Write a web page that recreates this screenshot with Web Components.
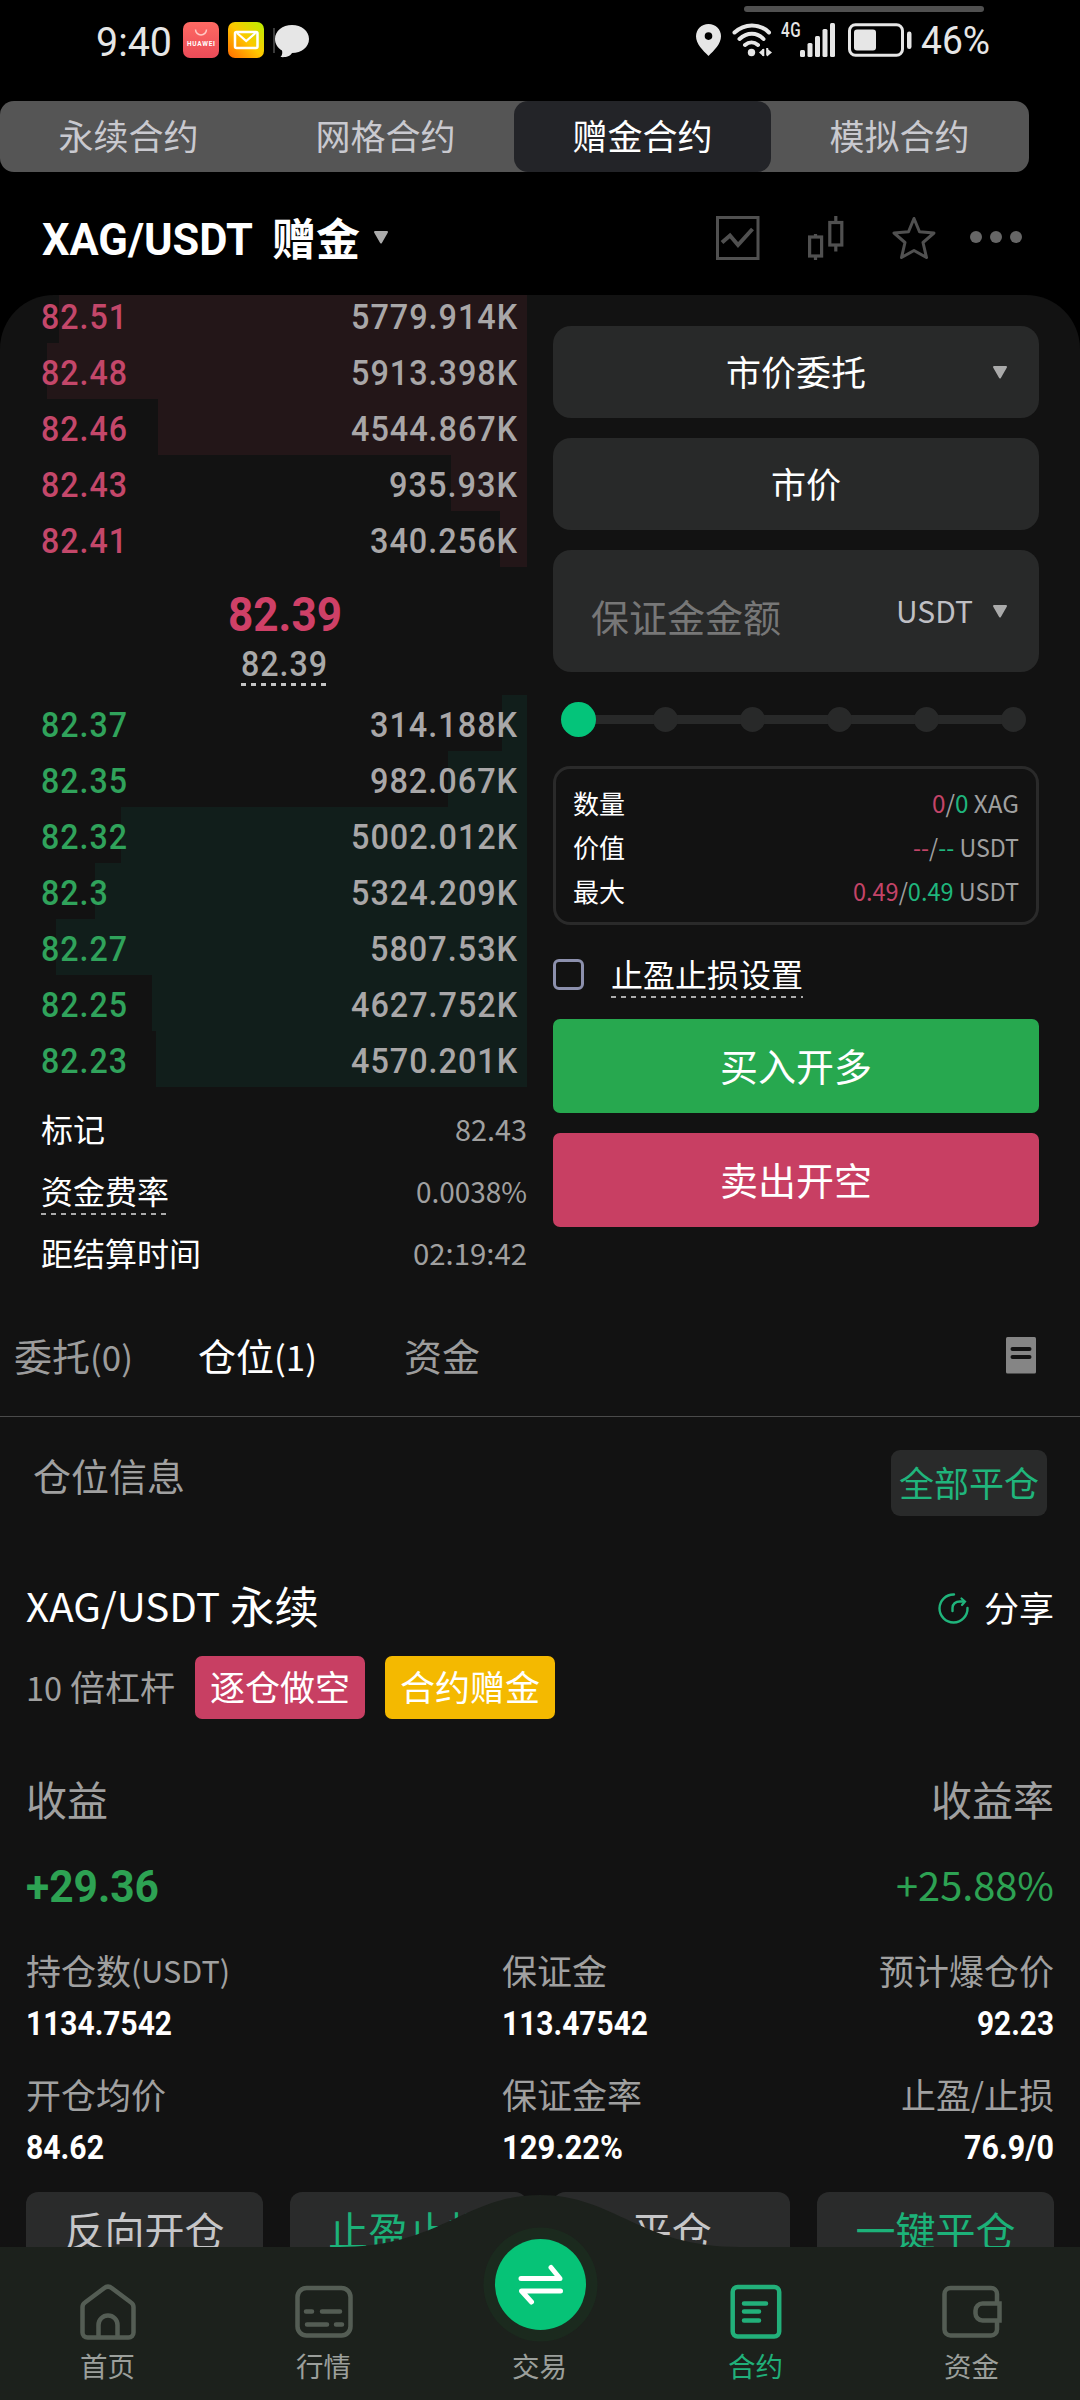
<!DOCTYPE html>
<html lang="zh-CN">
<head>
<meta charset="utf-8">
<title>XAG/USDT 赠金合约</title>
<style>
html,body{margin:0;padding:0;background:#000}
body{width:1080px;height:2400px;overflow:hidden;color:#fff;font-family:"Noto Sans CJK SC","Noto Sans",sans-serif}
</style>
</head>
<body>
<contract-page></contract-page>
<script>
const define = (name, css, html, after) => customElements.define(name, class extends HTMLElement {
  connectedCallback() {
    if (this.shadowRoot) return;
    const root = this.attachShadow({ mode: "open" });
    root.innerHTML = `<style>*{box-sizing:border-box}:host{display:block;box-sizing:border-box}svg{display:block;flex:none}${css}</style>` +
      (typeof html === "function" ? html(this) : html);
    if (after) after(this, root);
  }
});

/* Single line of text, vertically centred on its glyphs and fitted to an optional width.
   s = font size, w = width, f = face (d: bold numerals, r: medium numerals) */
define("t-x", `
:host{display:inline-flex;align-items:center;flex:none;white-space:nowrap;line-height:1}
span{display:inline-block;flex:none;transform-origin:0 50%}
`, `<span><slot></slot></span>`, (el, root) => {
  const span = root.querySelector("span"), f = el.getAttribute("f");
  const s = +el.getAttribute("s"), w = +el.getAttribute("w");
  el.style.fontSize = s + "px";
  if (f) {
    span.style.fontFamily = 'Roboto,"Noto Sans CJK SC",sans-serif';
    span.style.fontWeight = f === "d" ? 700 : f === "r" ? 500 : 400;
  }
  if (f === "r") span.style.letterSpacing = ".03em";
  const dy = f ? 0.014 : -0.065;
  let sx = 1;
  if (w) { sx = w / span.getBoundingClientRect().width; el.style.width = w + "px"; }
  span.style.transform = `translateY(${dy * s}px) scaleX(${sx})`;
});

define("down-caret", `:host{flex:none}`, `<svg width="16" height="13" viewBox="0 0 16 13"><path d="M2 1H14L8 11.500Z" fill="#aaa" stroke="#aaa" stroke-width="2" stroke-linejoin="round"/></svg>`);

define("dash-line", `:host{height:var(--h,2px);background:repeating-linear-gradient(90deg,var(--c,#aaa) 0 5px,transparent 5px 10px)}`, ``);

define("status-bar", `
:host{height:101px;color:#e6e6e6;position:relative}
.row{display:flex;align-items:center;height:79px;padding:0 90px 0 96px}
.sp{flex:1}
.grip{position:absolute;left:744px;top:6px;width:240px;height:6px;border-radius:3px;background:#505050}
`, `
<div class="grip"></div>
<div class="row">
 <t-x s="41" w="76" f="n" style="margin-top:3px">9:40</t-x>
 <svg style="margin-left:11px" width="36" height="36" viewBox="0 0 36 36"><defs><linearGradient id="a" x1="0" y1="0" x2="0" y2="1"><stop offset="0" stop-color="#ff6a63"/><stop offset="1" stop-color="#ea4b58"/></linearGradient></defs><rect width="36" height="36" rx="7" fill="url(#a)"/><path d="M12.500 7.500a5.500 5.500 0 0 0 11 0" fill="none" stroke="#ffc9c4" stroke-width="1.500"/><text x="4" y="23.800" font-family="Roboto" font-weight="700" font-size="6.500" textLength="28" fill="#fff">HUAWEI</text></svg>
 <svg style="margin-left:9px" width="36" height="36" viewBox="0 0 36 36"><defs><linearGradient id="b" x1="0" y1="1" x2="1" y2="0"><stop offset="0" stop-color="#ff6a00"/><stop offset=".5" stop-color="#ffc800"/><stop offset="1" stop-color="#b8f000"/></linearGradient></defs><rect width="36" height="36" rx="7" fill="url(#b)"/><rect x="7" y="10" width="22.500" height="16" rx="1.500" fill="none" stroke="#fff" stroke-width="2.500"/><path d="M9 11l9.200 8L27.500 11" fill="none" stroke="#fff" stroke-width="2.300"/></svg>
 <svg style="margin-left:9px" width="37" height="36" viewBox="0 0 37 36"><path d="M1 6v25" stroke="#777" stroke-width="1"/><path d="M19 3C28.500 3 36 9 36 17s-7.500 14-17 14c-2 4-8 4.500-11.500 4C9.500 33 9.500 30.500 9 28.500 4.500 26 2 21.800 2 17 2 9 9.500 3 19 3Z" fill="#e6e6e6"/></svg>
 <div class="sp"></div>
 <svg width="25" height="32" viewBox="0 0 25 32"><path fill-rule="evenodd" d="M12.500 0C19.500 0 25 5.300 25 12.300 25 20 18 26.500 12.500 32 7 26.500 0 20 0 12.300 0 5.300 5.500 0 12.500 0Zm0 8.300a3.800 3.800 0 1 0 0 7.600 3.800 3.800 0 0 0 0-7.600Z" fill="#e6e6e6"/></svg>
 <svg style="margin-left:11px" width="42" height="34" viewBox="0 0 42 34" fill="none" stroke="#e6e6e6" stroke-width="4" stroke-linecap="round"><path d="M2.500 9.500C12.500 0 27.500 0 37 9.500M7.500 16C15 9 25 9 31.500 16M13 22C17 18.500 22 18.500 26 22"/><circle cx="19.500" cy="29.500" r="3.700" fill="#e6e6e6" stroke="none"/><path d="M31.500 25.500v8l-4.500-4ZM35 33.500v-8l5 4Z" fill="#e6e6e6" stroke="none"/><path d="M31.300 26v7M35.200 25v7.500" stroke-width="2" stroke-linecap="butt"/></svg>
 <t-x s="21" w="20" f="r" style="margin:-19px 0 0 7px">4G</t-x>
 <svg style="margin-left:-1px" width="36" height="34" viewBox="0 0 36 34" fill="#e6e6e6"><rect x="0" y="27" width="5" height="7" rx="1.500"/><rect x="7.500" y="20" width="5" height="14" rx="1.500"/><rect x="15" y="13" width="5" height="21" rx="1.500"/><rect x="22.500" y="6" width="5" height="28" rx="1.500"/><rect x="30" y="0" width="5" height="34" rx="1.500"/></svg>
 <svg style="margin-left:12px" width="64" height="34" viewBox="0 0 64 34"><rect x="1.500" y="1.700" width="53" height="30.500" rx="6" fill="none" stroke="#e6e6e6" stroke-width="3"/><rect x="6" y="6.500" width="22" height="21" rx="3" fill="#e6e6e6"/><rect x="59" y="8.500" width="4.500" height="17.500" rx="2.200" fill="#e6e6e6"/></svg>
 <t-x s="39" w="69" f="n" style="margin:2px 0 0 9px">46%</t-x>
</div>`);

define("mode-tabs", `
:host{display:flex;width:1029px;height:71px;background:#555;border-radius:14px;overflow:hidden;color:#c9c9cf}
div{width:257px;display:flex;align-items:center;justify-content:center}
.on{background:#232428;color:#fff;border-radius:14px}
`, ["永续合约","网格合约","赠金合约","模拟合约"].map((t,i)=>`<div class="${i===2?"on":""}"><t-x s="35">${t}</t-x></div>`).join(""));

define("pair-header", `
:host{display:flex;align-items:center;height:123px;padding:8px 57px 0 42px}
.sp{flex:1}
`, `
<t-x s="44.500" w="211" f="d" style="margin-top:3px">XAG/USDT</t-x>
<t-x s="44" style="margin:4px 0 0 19px;font-weight:700">赠金</t-x>
<down-caret style="margin-left:13px"></down-caret>
<div class="sp"></div>
<svg width="44" height="44" viewBox="0 0 44 44" fill="none" stroke="#505050" stroke-width="3"><rect x="1.500" y="1.500" width="40.500" height="41"/><path d="M6 26.500l8-7 8 9.500 14.500-16" stroke-width="4"/></svg>
<svg style="margin-left:48px" width="36" height="44" viewBox="0 0 36 44" fill="none" stroke="#505050" stroke-width="3.200"><rect x="1.600" y="21" width="12" height="19"/><path d="M7.500 18v3M7.500 40v4"/><rect x="21.800" y="6.500" width="12" height="22.500"/><path d="M27.800 0v6.500M27.800 29v6.500"/></svg>
<svg style="margin-left:48px" width="44" height="44" viewBox="0 0 44 44" fill="none" stroke="#505050" stroke-width="3" stroke-linejoin="round"><path d="M22 2.500L27.500 15.800 42 17 31 26.500 34.500 41.500 22 34.500 9.500 41.500 13 26.500 2 17 16.500 15.800Z"/></svg>
<svg style="margin-left:33px" width="54" height="14" viewBox="0 0 54 14" fill="#666"><circle cx="7" cy="6" r="6"/><circle cx="27" cy="6" r="6"/><circle cx="47" cy="6" r="6"/></svg>`);

define("book-row", `
:host{display:flex;justify-content:space-between;align-items:center;height:56px;padding:5px 10px 0 41px;background:linear-gradient(var(--bar),var(--bar)) no-repeat right/var(--w) 100%}
`, el => {
  const p = el.getAttribute("p"), q = el.getAttribute("q");
  el.style.setProperty("--w", 527 - +el.getAttribute("x") + "px");
  const wd = t => [...t].reduce((a,c)=>a+(c==="."?9.5:c==="K"?21:19.1),0);
  return `<t-x s="35" w="${wd(p)+1}" f="r" style="color:var(--price)">${p}</t-x><t-x s="35" w="${wd(q)+3}" f="r" style="color:#a9a7a8;margin-right:-1px">${q}</t-x>`;
});

define("order-book", `
:host{width:527px;flex:none;margin-top:-8px}
.ask{--bar:#231618;--price:#c4476a}
.bid{--bar:#111e1b;--price:#30a35b}
.mid{height:128px;margin-left:42px;padding-top:24px;display:flex;flex-direction:column;align-items:center}
.info{padding:12px 0 0 41px}
.info>div{display:flex;justify-content:space-between;align-items:center;height:62px;color:#a0a0a0}
.info b{font-weight:400;color:#fff;display:flex;flex-direction:column;justify-content:center;height:62px}
.info dash-line{margin:5px 0 -7px}
`, () => {
  const rows = a => a.map(r=>`<book-row p="${r[0]}" q="${r[1]}" x="${r[2]}"></book-row>`).join("");
  return `<div class="ask">${rows([["82.51","5779.914K",59],["82.48","5913.398K",47],["82.46","4544.867K",158],["82.43","935.93K",451],["82.41","340.256K",500]])}</div>
<div class="mid"><t-x s="48" w="114" f="d" style="height:46px;color:#cf4067">82.39</t-x><t-x s="35" w="87" f="r" style="height:33px;margin:11px 0 0 -1px;color:#a9a9a9">82.39</t-x><dash-line style="--h:3px;--c:#c4c4c4;width:86px;margin:2px 2px 0 0"></dash-line></div>
<div class="bid">${rows([["82.37","314.188K",502],["82.35","982.067K",448],["82.32","5002.012K",121],["82.3","5324.209K",95],["82.27","5807.53K",56],["82.25","4627.752K",152],["82.23","4570.201K",156]])}</div>
<div class="info">
<div><b><t-x s="32">标记</t-x></b><t-x s="29" w="72">82.43</t-x></div>
<div><b><t-x s="32">资金费率</t-x><dash-line style="width:126px"></dash-line></b><t-x s="29" w="111">0.0038%</t-x></div>
<div><b><t-x s="32">距结算时间</t-x></b><t-x s="29" w="114">02:19:42</t-x></div>
</div>`;
});

define("amount-slider", `
:host{display:flex;align-items:center;justify-content:space-between;height:36px;margin:29px 13px 0 8px;background:linear-gradient(#282929,#282929) no-repeat 20px 50%/430px 9px}
i{width:25px;height:25px;border-radius:50%;background:#282929}
.on{width:35px;height:35px;background:#04c47a;margin-right:-5px}
`, `<i class="on"></i><i></i><i></i><i></i><i></i><i></i>`);

define("order-form", `
:host{width:486px;margin:31px 0 0 26px;flex:none}
.box{height:92px;margin-bottom:20px;border-radius:18px;background:#282929;display:flex;align-items:center;justify-content:center}
.box.sel{justify-content:space-between;padding:0 31px 0 173px}
.box.amt{height:122px;margin:0;padding:0 31px 0 38px}
.sp{flex:1}
.sum{height:159px;margin-top:29px;border:3px solid #2a2a2a;border-radius:17px;padding:14px 17px 0 17px}
.sum div{display:flex;justify-content:space-between;align-items:center;height:44px;color:#a0a0a0}
.sum div>t-x:first-child{color:#fff}
.s{color:#c44468}.l{color:#1fb67d}
.chk{display:flex;align-items:center;height:94px;padding-top:5px}
.chk i{width:31px;height:31px;border:3px solid #8c90ad;border-radius:6px;margin-right:27px}
.chk t-x{margin-bottom:5px}
.chk div{display:flex;flex-direction:column}
.chk dash-line{margin-bottom:-7px}
.btn{height:94px;border-radius:7px;display:flex;align-items:center;justify-content:center}
.buy{background:#27a84f;margin-bottom:20px}.sell{background:#c83f63}
`, `
<div class="box sel"><t-x s="35">市价委托</t-x><down-caret></down-caret></div>
<div class="box" style="padding-left:20px"><t-x s="35">市价</t-x></div>
<div class="box amt"><t-x s="38" style="color:#777;margin-top:14px">保证金金额</t-x><div class="sp"></div><t-x s="30" w="77" style="color:#bfbfc4;margin-top:2px">USDT</t-x><down-caret style="margin-left:19px"></down-caret></div>
<amount-slider></amount-slider>
<div class="sum">
<div><t-x s="26">数量</t-x><t-x s="24" w="87"><span class="s">0</span>/<span class="l">0</span> XAG</t-x></div>
<div><t-x s="26">价值</t-x><t-x s="24" w="106"><span class="s">--</span>/<span class="l">--</span> USDT</t-x></div>
<div><t-x s="26">最大</t-x><t-x s="24" w="166"><span class="s">0.49</span>/<span class="l">0.49</span> USDT</t-x></div>
</div>
<div class="chk"><i></i><div><t-x s="32">止盈止损设置</t-x><dash-line></dash-line></div></div>
<div class="btn buy"><t-x s="38" style="margin-top:2px">买入开多</t-x></div>
<div class="btn sell"><t-x s="38" style="margin-top:2px">卖出开空</t-x></div>`);

define("position-tabs", `
:host{display:flex;align-items:center;height:132px;padding:13px 44px 0 14px;border-bottom:1px solid #4a4a4a;color:#9c9c9c}
.sp{flex:1}div{display:flex;align-items:center}.on{color:#fff}
`, `
<div><t-x s="38">委托</t-x><t-x s="34" w="43" style="margin-top:3px">(0)</t-x></div>
<div class="on" style="margin-left:65px"><t-x s="38" >仓位</t-x><t-x s="34" w="43" style="margin-top:3px">(1)</t-x></div>
<t-x s="38" style="margin-left:87px">资金</t-x>
<div class="sp"></div>
<svg style="margin-top:-4px" width="30" height="37" viewBox="0 0 30 37"><rect width="30" height="36.500" rx="1.500" fill="#858585"/><path d="M6.500 12h17M6.500 20h17" stroke="#121212" stroke-width="4" stroke-linecap="round"/></svg>`);

define("metric-cell", `
:host{flex:none;display:flex;flex-direction:column;color:#a0a0a0}
:host([end]){align-items:flex-end;margin-left:auto}
.l{display:flex;align-items:center;height:40px}
.v{display:flex;align-items:center;height:30px;margin-top:18px;margin-bottom:-1px;color:#fff}
`, el => `<div class="l"><slot></slot></div><div class="v"><t-x s="32.500" w="${el.getAttribute("w")}" f="d">${el.getAttribute("v")}</t-x></div>`);

define("position-card", `
:host{padding:33px 26px 0 26px;color:#a0a0a0}
.r{display:flex;justify-content:space-between;align-items:center}
.g{color:#2da253}.tag{height:63px;border-radius:7px;padding:0 15px;display:flex;align-items:center;color:#fff}
.all{width:156px;height:66px;border-radius:9px;background:#292a2a;color:#20b57c;display:flex;align-items:center;justify-content:center;margin-right:7px}
.m{display:flex}
.m metric-cell:first-child{width:476px}
.acts{display:flex;gap:26.700px;margin:30px 0 0 0}
.acts div{flex:1;height:84px;border-radius:12px;background:#2a2b2b;color:#c6c6c8;display:flex;justify-content:center;align-items:center;padding-bottom:4px}
.acts .k{color:#1cb279}
`, `
<div class="r" style="align-items:flex-start"><t-x s="38" style="margin:8px 0 0 7px">仓位信息</t-x><div class="all"><t-x s="35">全部平仓</t-x></div></div>
<div class="r" style="height:60px;margin-top:62px;color:#fff"><div style="display:flex;align-items:center"><t-x s="39" w="194" style="margin-top:1px">XAG/USDT</t-x><t-x s="44.500" style="margin-left:10px">永续</t-x></div>
<div style="display:flex;align-items:center"><svg width="31" height="31" viewBox="0 0 31 31" fill="none" stroke="#20b57c" stroke-width="2.400" stroke-linecap="round"><path d="M16 1.500A14 14 0 1 0 29.500 15"/><path d="M14.500 18v-3c0-4 3-6.500 7.500-6.500h3"/><path d="M23.500 5.500l3.500 3-3 3.500" stroke-width="2.200"/></svg><t-x s="35" style="margin-left:15px">分享</t-x></div></div>
<div class="r" style="justify-content:flex-start;height:63px;margin-top:18px"><t-x s="32" w="36" style="margin-top:2px">10</t-x><t-x s="35" style="margin-left:8px;width:105px">倍杠杆</t-x><div class="tag" style="background:#c83f63;margin-left:20px"><t-x s="35">逐仓做空</t-x></div><div class="tag" style="background:#f4b900;margin-left:20px"><t-x s="35">合约赠金</t-x></div></div>
<div class="r" style="height:50px;margin-top:57px"><t-x s="41">收益</t-x><t-x s="41">收益率</t-x></div>
<div class="r g" style="height:40px;margin-top:40px"><t-x s="45" w="133" f="d" style="margin-top:-2px">+29.36</t-x><t-x s="39" w="158" style="margin-top:2px">+25.88%</t-x></div>
<div class="m" style="margin-top:45px"><metric-cell v="1134.7542" w="146"><t-x s="35">持仓数</t-x><t-x s="30.500" w="99" style="margin-top:2px">(USDT)</t-x></metric-cell><metric-cell v="113.47542" w="146"><t-x s="35">保证金</t-x></metric-cell><metric-cell end v="92.23" w="77"><t-x s="35">预计爆仓价</t-x></metric-cell></div>
<div class="m" style="margin-top:37px"><metric-cell v="84.62" w="78"><t-x s="35">开仓均价</t-x></metric-cell><metric-cell v="129.22%" w="121"><t-x s="35">保证金率</t-x></metric-cell><metric-cell end v="76.9/0" w="90"><t-x s="35">止盈</t-x><t-x s="33" w="13">/</t-x><t-x s="35">止损</t-x></metric-cell></div>
<div class="acts"><div><t-x s="40">反向开仓</t-x></div><div class="k"><t-x s="40">止盈止损</t-x></div><div><t-x s="40">平仓</t-x></div><div class="k"><t-x s="40">一键平仓</t-x></div></div>`);

define("bottom-nav", `
:host{position:absolute;left:0;bottom:0;width:1080px;height:206px}
.bg{position:absolute;left:0;top:0}
.row{position:relative;display:flex;height:206px}
.row div{width:216px;display:flex;flex-direction:column;align-items:center;justify-content:flex-end;padding:0 1px 19px 0;color:#9b9f9b}
svg.i{fill:none;stroke:#545d54;stroke-width:4.500;margin-bottom:14px}
.row .on{color:#20b07a}.on svg.i{stroke:#22b07a}
`, `
<svg class="bg" width="1080" height="206" viewBox="0 0 1080 206"><path d="M0 53H340C440 53 466 1 540 1S640 53 740 53H1080V206H0Z" fill="#1c211c"/><circle cx="540.500" cy="90.500" r="57" fill="#1b2a1e"/><circle cx="540.500" cy="90.500" r="45.500" fill="#06c377"/><path d="M521 84.500H560L551 73.500M560.500 97H521.500L531.500 108" fill="none" stroke="#fff" stroke-width="5" stroke-linecap="round" stroke-linejoin="round"/></svg>
<div class="row">
<div><svg class="i" width="56" height="56" viewBox="0 0 56 56"><path d="M2.500 23C2.500 21 3.500 19.500 5 18.500L24 4.200c2.500-1.900 5.500-1.900 8 0L51 18.500c1.500 1 2.500 2.500 2.500 4.500V48.500a5 5 0 0 1-5 5H7.500a5 5 0 0 1-5-5Z"/><path d="M18.500 53V41a9.500 9.500 0 0 1 19 0V53"/></svg><t-x s="27.500">首页</t-x></div>
<div><svg class="i" width="58" height="56" viewBox="0 0 58 56"><rect x="2.500" y="4" width="53" height="47.500" rx="9"/><path d="M11 27.500h6M27 27.500h18M12 40.500h20M41 40.500h6" stroke-linecap="round"/></svg><t-x s="27.500">行情</t-x></div>
<div><t-x s="27.500">交易</t-x></div>
<div class="on"><svg class="i" width="52" height="56" viewBox="0 0 52 56"><rect x="2.700" y="3" width="46.500" height="49.500" rx="5"/><path d="M14 19.500h22M14 27.500h15M14 36.500h15" stroke-linecap="round"/></svg><t-x s="27.500">合约</t-x></div>
<div><svg class="i" width="60" height="56" viewBox="0 0 60 56"><path d="M55 19V10a6 6 0 0 0-6-6H8.500a6 6 0 0 0-6 6V45.500a6 6 0 0 0 6 6H49a6 6 0 0 0 6-6V37"/><path d="M57.500 19.500H40.500a7 7 0 0 0-7 7v3a7 7 0 0 0 7 7H57.500Z"/></svg><t-x s="27.500">资金</t-x></div>
</div>`);

define("contract-page", `
:host{position:relative;width:1080px;height:2400px;background:#000;overflow:hidden}
main{background:#121212;border-radius:54px 54px 0 0;height:2105px;overflow:hidden}
.trade{display:flex;align-items:flex-start;height:990px}
`, `
<status-bar></status-bar>
<mode-tabs></mode-tabs>
<pair-header></pair-header>
<main>
<div class="trade"><order-book></order-book><order-form></order-form></div>
<position-tabs></position-tabs>
<position-card></position-card>
</main>
<bottom-nav></bottom-nav>`);
</script>
</body>
</html>
